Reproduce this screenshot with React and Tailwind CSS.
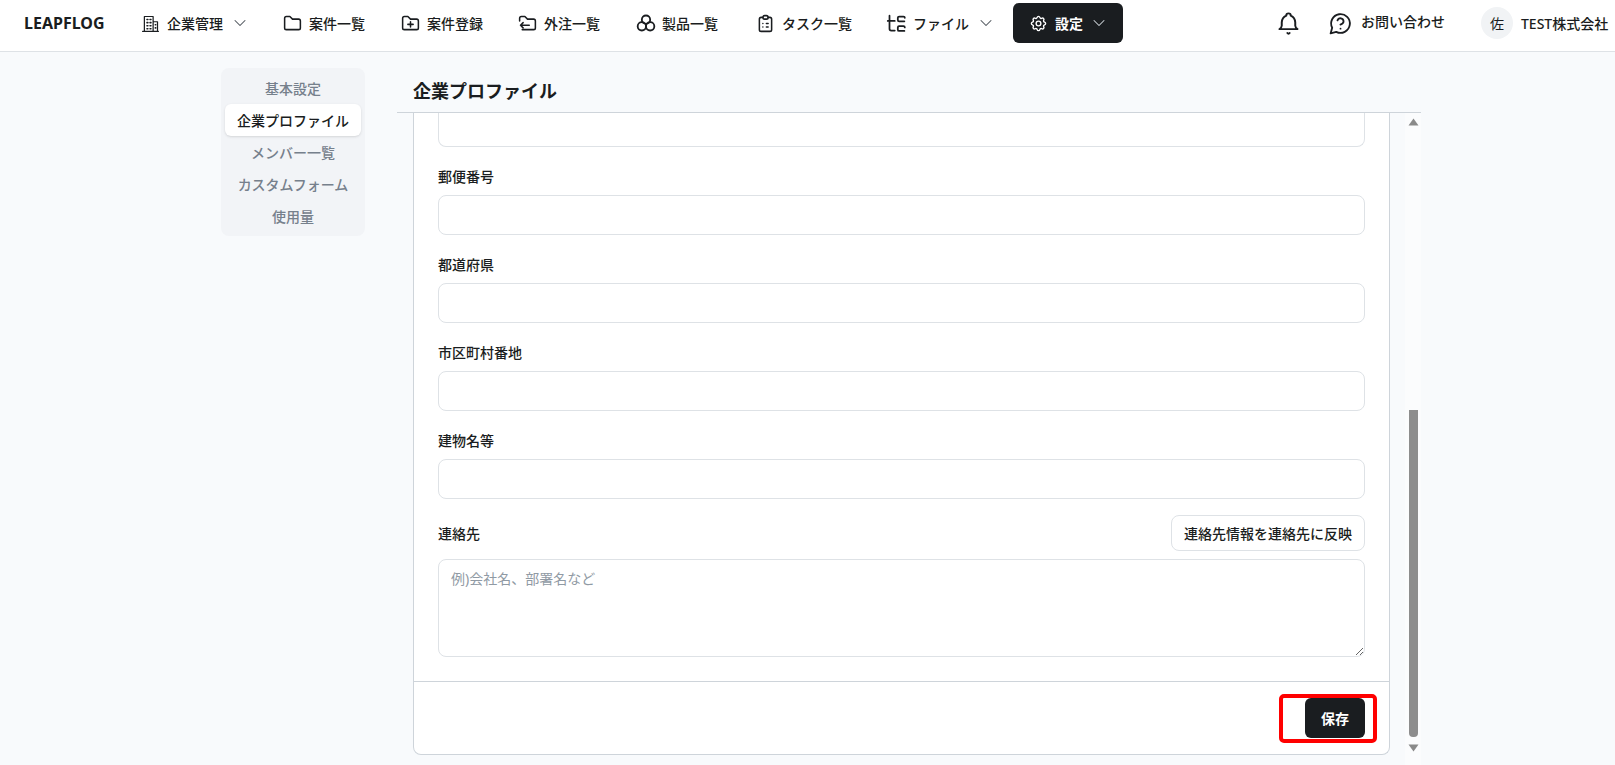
import React from "react";
import { TbFolder, TbClipboardList, TbSettings, TbChevronDown } from "react-icons/tb";

const Svg = ({ size = 20, sw = 1.75, children }) => (
  <svg width={size} height={size} viewBox="0 0 24 24" fill="none" stroke="currentColor" strokeWidth={sw} strokeLinecap="round" strokeLinejoin="round" className="shrink-0">
    {children}
  </svg>
);

const Building = () => (
  <Svg size={21} sw={1.4}>
    <path d="M3 21h18M5 21V4h10v17M15 10h5v11" />
    <path d="M8 7.5h1M11.5 7.5h1M8 11h1M11.5 11h1M8 14.500h1M11.500 14.500h1M8 18h1M11.500 18h1M17.500 13.500h.5M17.500 17h.5" strokeWidth="1.8" />
  </Svg>
);

const FolderPlusIn = () => (
  <Svg size={21}>
    <path d="M5 4h4l3 3h7a2 2 0 0 1 2 2v8a2 2 0 0 1-2 2H5a2 2 0 0 1-2-2V6a2 2 0 0 1 2-2" />
    <path d="M12 10v6M9 13h6" />
  </Svg>
);

const FolderBack = () => (
  <Svg size={21}>
    <path d="M3 9V6a2 2 0 0 1 2-2h4l3 3h7a2 2 0 0 1 2 2v8a2 2 0 0 1-2 2H6" />
    <path d="M14 14H4M7 11l-3 3 3 3" />
  </Svg>
);

const FileTree = () => (
  <Svg size={21} sw={2}>
    <path d="M4 3v15a2 2 0 0 0 2 2h4M2 9h8" />
    <path d="M21 9.500h-6a1.500 1.500 0 0 1-1.500-1.500V5.500A1.500 1.500 0 0 1 15 4h5a1.500 1.500 0 0 1 1.500 1.500" />
    <path d="M21 20.500h-6a1.500 1.500 0 0 1-1.500-1.500v-2.500A1.500 1.500 0 0 1 15 15h5a1.500 1.500 0 0 1 1.500 1.500" />
  </Svg>
);

const Circles = () => (
  <Svg size={20} sw={2.2}>
    <circle cx="12" cy="8" r="5" />
    <circle cx="7" cy="16" r="5" />
    <circle cx="17" cy="16" r="5" />
  </Svg>
);

const Bell = () => (
  <Svg size={27}>
    <path d="M10 5a2 2 0 1 1 4 0 7 7 0 0 1 4 6v3a4 4 0 0 0 2 3H4a4 4 0 0 0 2-3v-3a7 7 0 0 1 4-6" />
    <path d="M11 20.500a1.200 1.200 0 0 0 2 0" />
  </Svg>
);

const HelpBubble = () => (
  <Svg size={25}>
    <path d="M7.900 20A9 9 0 1 0 4 16.100L2.500 21.500Z" />
    <path d="M9.090 9a3 3 0 0 1 5.830 1c0 2-3 3-3 3" />
    <path d="M12 17h.01" />
  </Svg>
);

const NavItem = ({ icon, label, chevron, className = "" }) => (
  <div className={`flex shrink-0 items-center text-[14px] font-medium text-[#1a1d20] ${className}`}>
    <span className="flex w-[17px] justify-center">{icon}</span>
    <span className="ml-[8px]">{label}</span>
    {chevron && <TbChevronDown size={20} strokeWidth={1.25} className="ml-[7px] shrink-0 text-[#495057]" />}
  </div>
);

const Field = ({ label }) => (
  <div className="mt-[20px]">
    <div className="text-[14px] font-medium leading-[20px] text-[#1a1d20]">{label}</div>
    <input className="mt-[8px] block h-[40px] w-full rounded-[8px] border border-[#dee2e6] bg-white" />
  </div>
);

export default function App() {
  return (
    <div
      className="flex h-[765px] w-[1615px] flex-col overflow-hidden bg-[#f8fafc]"
      style={{ fontFamily: '"Noto Sans", "Noto Sans CJK JP", sans-serif' }}
    >
      <header className="flex h-[52px] shrink-0 items-center border-b border-[#dee2e6] bg-white pb-[5px] pl-[24px]">
        <div className="w-[118px] text-[16px] font-bold text-[#1a1d20]">LEAPFLOG</div>
        <NavItem icon={<Building />} label="企業管理" chevron className="w-[142px]" />
        <NavItem icon={<TbFolder size={21} strokeWidth={1.75} className="shrink-0" />} label="案件一覧" className="w-[118px]" />
        <NavItem icon={<FolderPlusIn />} label="案件登録" className="w-[117px]" />
        <NavItem icon={<FolderBack />} label="外注一覧" className="w-[118px]" />
        <NavItem icon={<Circles />} label="製品一覧" className="w-[120px]" />
        <NavItem icon={<TbClipboardList size={21} strokeWidth={1.75} className="shrink-0" />} label="タスク一覧" className="w-[131px]" />
        <NavItem icon={<FileTree />} label="ファイル" chevron className="w-[125px]" />
        <div className="flex h-[40px] w-[110px] shrink-0 items-center rounded-[6px] bg-[#1a1d20] pl-[16px] text-[14px] font-bold text-white">
          <TbSettings size={19} strokeWidth={1.75} className="shrink-0" />
          <span className="ml-[7px]">設定</span>
          <TbChevronDown size={20} strokeWidth={1.25} className="ml-[6px] shrink-0 text-[#ced4da]" />
        </div>
        <div className="ml-[154px] flex w-[22px] justify-center text-[#1a1d20]">
          <Bell />
        </div>
        <div className="ml-[29px] flex items-center text-[#1a1d20]">
          <HelpBubble />
          <span className="mb-[3px] ml-[8px] text-[14px] font-medium">お問い合わせ</span>
        </div>
        <div className="ml-[36px] flex h-[32px] w-[32px] items-center justify-center rounded-full bg-[#f1f3f5] text-[14px] text-[#1a1d20]">佐</div>
        <span className="ml-[8px] whitespace-nowrap text-[14px] font-medium text-[#1a1d20]">TEST株式会社</span>
      </header>

      <main className="flex min-h-0 flex-1 pl-[221px] pt-[16px]">
        <nav className="h-[168px] w-[144px] shrink-0 rounded-[8px] bg-[#f2f4f7] p-[4px] text-center text-[14px] font-medium leading-[34px] text-[#76808c]">
          <div className="h-[32px]">基本設定</div>
          <div className="h-[32px] rounded-[6px] bg-white text-[#1a1d20] shadow-sm">企業プロファイル</div>
          <div className="h-[32px]">メンバー一覧</div>
          <div className="h-[32px] whitespace-nowrap">カスタムフォーム</div>
          <div className="h-[32px]">使用量</div>
        </nav>

        <section className="ml-[32px] flex w-[1024px] min-w-0 flex-col">
          <div className="-mt-[16px] flex h-[61px] shrink-0 items-end border-b border-[#ced4da] pb-[7px] pl-[16px] text-[18px] font-bold leading-[28px] text-[#1a1d20]">
            企業プロファイル
          </div>
          <div className="flex min-h-0 flex-1">
            <div className="relative mb-[10px] ml-[16px] flex w-[978px] flex-col rounded-b-[8px] border border-t-0 border-[#ced4da] bg-white">
              <div className="flex-1 overflow-hidden px-[24px]">
                <div className="h-[34px] rounded-b-[8px] border border-t-0 border-[#dee2e6]" />
                <Field label="郵便番号" />
                <Field label="都道府県" />
                <Field label="市区町村番地" />
                <Field label="建物名等" />
                <div className="mt-[16px] flex h-[36px] items-center justify-between">
                  <span className="text-[14px] font-medium text-[#1a1d20]">連絡先</span>
                  <button className="h-[36px] w-[194px] rounded-[8px] border border-[#dee2e6] bg-white text-[14px] font-medium text-[#1a1d20]">
                    連絡先情報を連絡先に反映
                  </button>
                </div>
                <textarea
                  placeholder="例)会社名、部署名など"
                  className="mt-[8px] block h-[98px] w-full rounded-[8px] border border-[#dee2e6] bg-white px-[12px] py-[8px] text-[14px] outline-none placeholder:text-[#909aa4]"
                />
              </div>
              <div className="flex h-[73px] shrink-0 justify-end border-t border-[#ced4da] pr-[24px] pt-[16px]">
                <button className="h-[40px] w-[60px] rounded-[6px] bg-[#1a1d20] text-[14px] font-bold text-white">保存</button>
              </div>
              <div className="absolute bottom-[11px] right-[12px] h-[49px] w-[98px] rounded-[5px] border-[4px] border-[#ff0000]" />
            </div>
            <div className="ml-[15px] flex w-[16px] flex-col items-center bg-[#fbfcfd]">
              <svg width="11" height="8" viewBox="0 0 11 8" className="mt-[5px] shrink-0"><path d="M5.500.5 10.500 7.500H.5z" fill="#8a8a8a" /></svg>
              <div className="flex-1" />
              <div className="h-[327px] w-[9px] rounded-b-[4px] bg-[#8d8d8d]" />
              <svg width="11" height="8" viewBox="0 0 11 8" className="mb-[13px] mt-[7px] shrink-0"><path d="M5.500 7.500.5.5h10z" fill="#8a8a8a" /></svg>
            </div>
          </div>
        </section>
      </main>
    </div>
  );
}
